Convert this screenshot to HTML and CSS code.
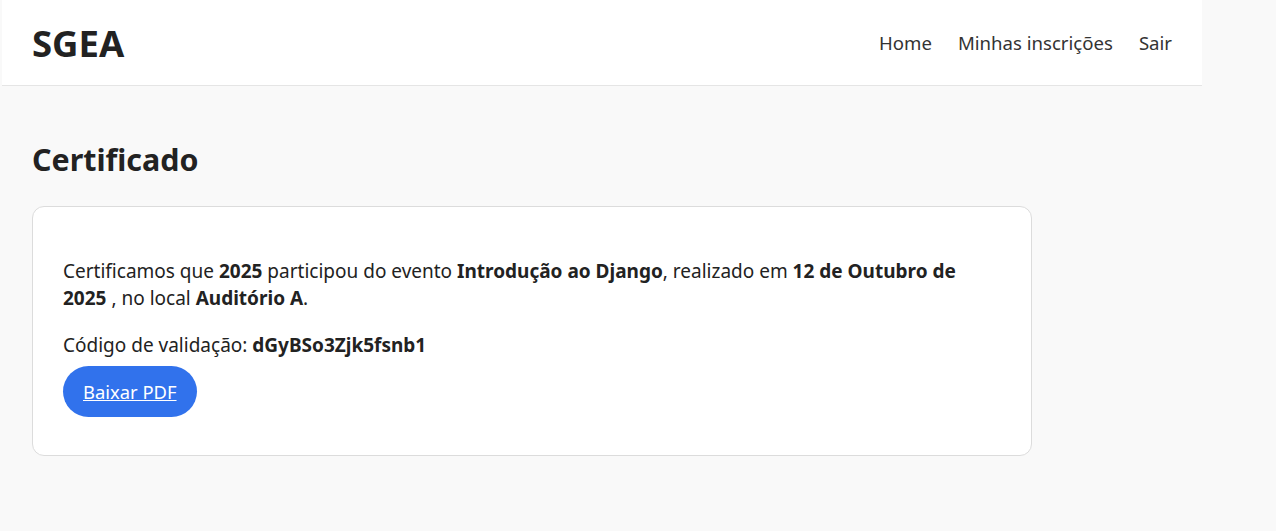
FILE: index.html
```html
<!DOCTYPE html>
<html lang="pt-br">
<head>
<meta charset="utf-8">
<title>SGEA - Certificado</title>
<link rel="stylesheet" href="styles.css">
</head>
<body>
<div class="page">
  <header class="topbar">
    <div class="brand">SGEA</div>
    <nav class="nav">
      <a href="#">Home</a>
      <a href="#">Minhas inscrições</a>
      <a href="#">Sair</a>
    </nav>
  </header>
  <main class="main">
    <h1 class="title">Certificado</h1>
    <section class="card">
      <p class="cert-text">Certificamos que <strong>2025</strong> participou do evento <strong>Introdução ao Django</strong>, realizado em <strong>12 de Outubro de 2025</strong> , no local <strong>Auditório A</strong>.</p>
      <p class="code">Código de validação: <strong>dGyBSo3Zjk5fsnb1</strong></p>
      <a class="btn" href="#">Baixar PDF</a>
    </section>
  </main>
</div>
</body>
</html>
```
FILE: styles.css
```css
html, body {
  margin: 0;
  padding: 0;
  background: #f9f9f9;
}
body {
  font-family: "Noto Sans", "Open Sans", sans-serif;
  color: #222;
}
.page {
  margin-left: 2px;
  width: 1200px;
}
.topbar {
  height: 85px;
  background: #fff;
  border-bottom: 1px solid #e5e5e5;
  display: flex;
  align-items: center;
  justify-content: space-between;
  padding: 0 30px;
  box-sizing: content-box;
  width: 1140px;
}
.brand {
  font-size: 36.5px;
  font-weight: 700;
  color: #222;
}
.nav {
  display: flex;
  gap: 26px;
}
.nav a {
  font-size: 18.6px;
  color: #333;
  text-decoration: none;
}
.main {
  padding: 54px 30px 40px;
}
.title {
  margin: 0 0 26px;
  font-size: 30.4px;
  line-height: 40px;
  font-weight: 700;
  color: #222;
}
.card {
  width: 938px;
  background: #fff;
  border: 1px solid #dcdcdc;
  border-radius: 12px;
  padding: 51px 30px 38px;
}
.cert-text {
  max-width: 920px;
  margin: 0 0 20px;
  font-size: 19px;
  line-height: 27px;
}
.code {
  margin: 0 0 7px;
  font-size: 19px;
  line-height: 27px;
}
.btn {
  display: inline-block;
  padding: 12px 20px;
  font-size: 18.4px;
  line-height: 27px;
  background: #3172ec;
  color: #fff;
  border-radius: 26px;
}
```
